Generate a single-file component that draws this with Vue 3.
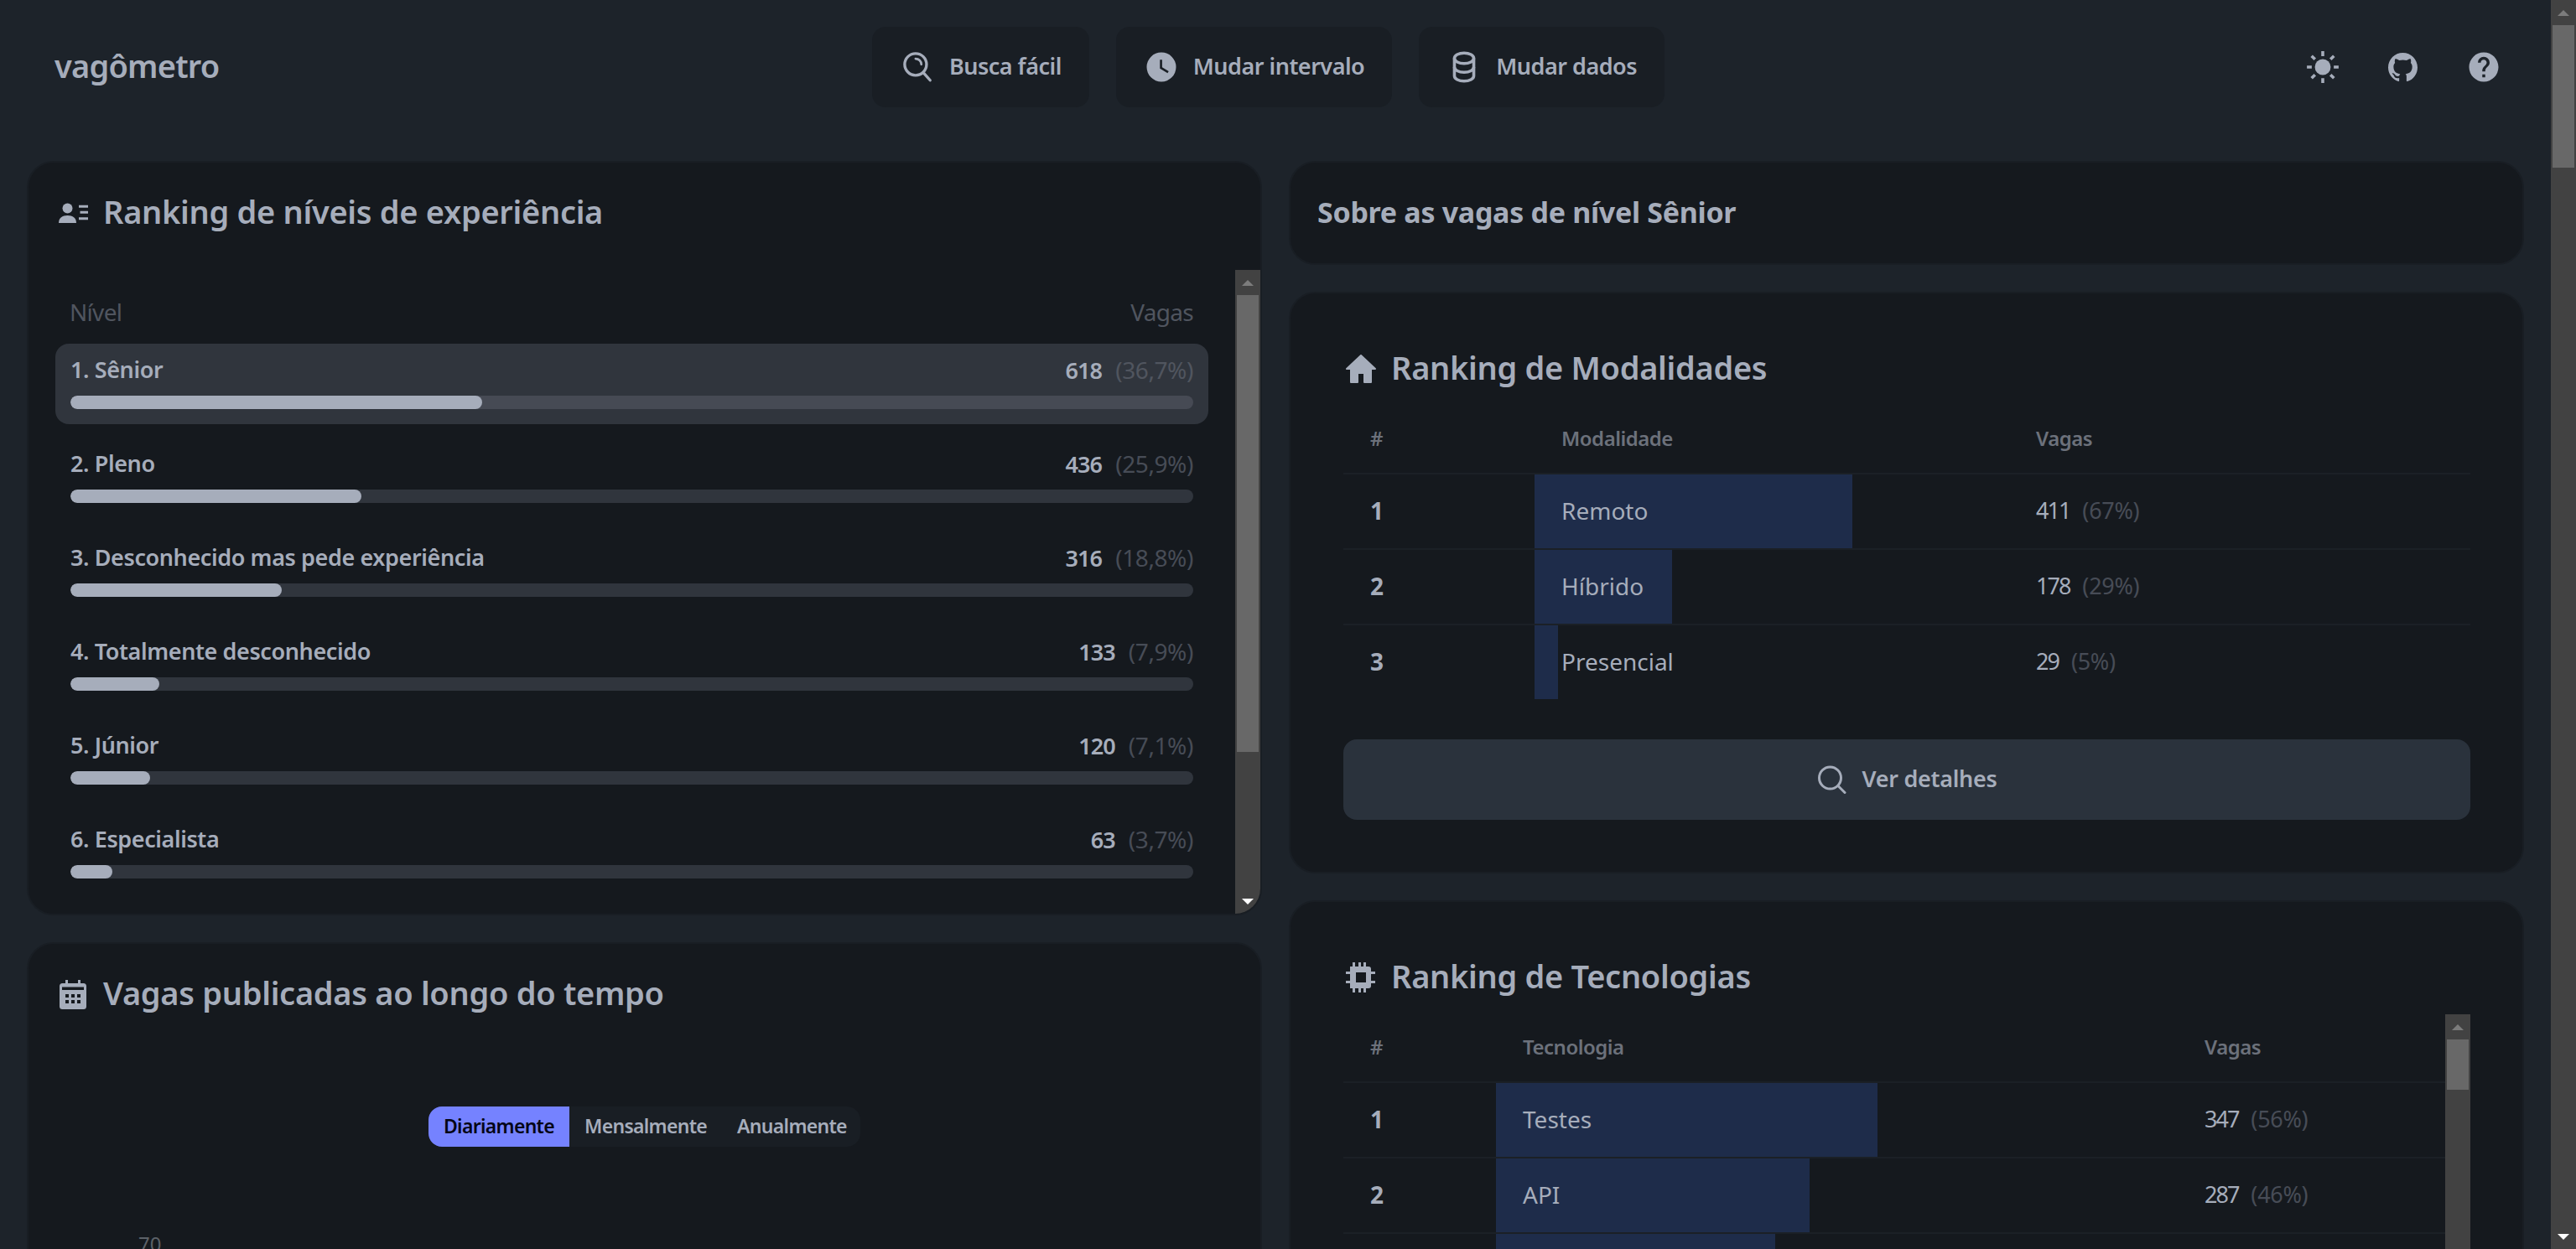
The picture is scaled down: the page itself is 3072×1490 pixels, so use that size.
<script setup>
const levels = [
  { name: '1. Sênior', count: 618, pct: 36.7, label: '36,7%', active: true },
  { name: '2. Pleno', count: 436, pct: 25.9, label: '25,9%' },
  { name: '3. Desconhecido mas pede experiência', count: 316, pct: 18.8, label: '18,8%' },
  { name: '4. Totalmente desconhecido', count: 133, pct: 7.9, label: '7,9%' },
  { name: '5. Júnior', count: 120, pct: 7.1, label: '7,1%' },
  { name: '6. Especialista', count: 63, pct: 3.7, label: '3,7%' },
]
const modes = [
  { rank: 1, name: 'Remoto', count: 411, pct: 67 },
  { rank: 2, name: 'Híbrido', count: 178, pct: 29 },
  { rank: 3, name: 'Presencial', count: 29, pct: 5 },
]
const techs = [
  { rank: 1, name: 'Testes', count: 347, pct: 56 },
  { rank: 2, name: 'API', count: 287, pct: 46 },
]
</script>

<template>
  <div class="app">
    <div class="main">
      <header class="header">
        <div class="logo">vagômetro</div>
        <nav class="nav">
          <button class="nav-btn">
            <svg class="ic" viewBox="0 0 40 40" fill="none" stroke="currentColor" stroke-width="3.2" stroke-linecap="round">
              <circle cx="18" cy="17" r="12.4" />
              <path d="M27 26.5l7.5 8.5" />
              <path d="M18 10.5a6.5 6.5 0 0 1 6.5 6.5" stroke-width="2.6" />
            </svg>
            <span>Busca fácil</span>
          </button>
          <button class="nav-btn">
            <svg class="ic" viewBox="0 0 24 24" fill="currentColor">
              <path d="M12,2A10,10 0 0,0 2,12A10,10 0 0,0 12,22A10,10 0 0,0 22,12A10,10 0 0,0 12,2M16.2,16.2L11,13V7H12.5V12.2L17,14.9L16.2,16.2Z" />
            </svg>
            <span>Mudar intervalo</span>
          </button>
          <button class="nav-btn">
            <svg class="ic" viewBox="0 0 40 40" fill="none" stroke="currentColor" stroke-width="3.4">
              <ellipse cx="20" cy="10" rx="11" ry="6" />
              <path d="M9 10v20c0 3.4 4.900 6 11 6s11-2.600 11-6V10" />
              <path d="M9 20c0 3.400 4.900 6 11 6s11-2.600 11-6" />
            </svg>
            <span>Mudar dados</span>
          </button>
        </nav>
        <div class="tools">
          <button class="tool">
            <svg class="ic" viewBox="0 0 40 40" fill="currentColor">
              <circle cx="20" cy="20" r="9" />
              <g stroke="currentColor" stroke-width="3.4">
                <path d="M20 2v5.5M20 32.5V38M2 20h5.5M32.5 20H38M7.3 7.3l3.9 3.9M28.8 28.8l3.9 3.9M7.3 32.7l3.9-3.9M28.8 11.2l3.9-3.9" />
              </g>
            </svg>
          </button>
          <button class="tool">
            <svg class="ic gh" viewBox="0 0 16 16" fill="currentColor">
              <path d="M8 0C3.58 0 0 3.58 0 8c0 3.54 2.29 6.53 5.47 7.59.4.07.55-.17.55-.38 0-.19-.01-.82-.01-1.49-2.01.37-2.53-.49-2.69-.94-.09-.23-.48-.94-.82-1.13-.28-.15-.68-.52-.01-.53.63-.01 1.08.58 1.23.82.72 1.21 1.87.87 2.33.66.07-.52.28-.87.51-1.07-1.78-.2-3.64-.89-3.64-3.95 0-.87.31-1.59.82-2.15-.08-.2-.36-1.02.08-2.12 0 0 .67-.21 2.2.82.64-.18 1.32-.27 2-.27.68 0 1.36.09 2 .27 1.53-1.04 2.2-.82 2.2-.82.44 1.1.16 1.92.08 2.12.51.56.82 1.27.82 2.15 0 3.07-1.87 3.75-3.65 3.95.29.25.54.73.54 1.48 0 1.07-.01 1.93-.01 2.2 0 .21.15.46.55.38A8.013 8.013 0 0016 8c0-4.42-3.58-8-8-8z" />
            </svg>
          </button>
          <button class="tool">
            <svg class="ic" viewBox="0 0 24 24" fill="currentColor">
              <path d="M15.07,11.25L14.17,12.17C13.45,12.89 13,13.5 13,15H11V14.5C11,13.39 11.45,12.39 12.17,11.67L13.41,10.41C13.78,10.05 14,9.55 14,9C14,7.89 13.1,7 12,7A2,2 0 0,0 10,9H8A4,4 0 0,1 12,5A4,4 0 0,1 16,9C16,9.88 15.64,10.67 15.07,11.25M13,19H11V17H13M12,2A10,10 0 0,0 2,12A10,10 0 0,0 12,22A10,10 0 0,0 22,12C22,6.47 17.5,2 12,2Z" />
            </svg>
          </button>
        </div>
      </header>

      <div class="columns">
        <div class="col">
          <section class="card card-levels">
            <h2 class="title">
              <span class="title-ic">
                <svg class="person" viewBox="0 0 35 24" fill="currentColor">
                  <circle cx="10.5" cy="6.5" r="6" />
                  <path d="M0 24c0-6 4.300-9 10.500-9s10.500 3 10.500 9z" />
                  <path d="M24 2.800h11v3H24zM25.500 9.800h9.500v3h-9.500zM24 17.300h11v3H24z" />
                </svg>
              </span>
              Ranking de níveis de experiência
            </h2>
            <div class="scroll-row">
              <div class="level-list">
                <div class="level-head">
                  <span>Nível</span>
                  <span>Vagas</span>
                </div>
                <div
                  v-for="l in levels"
                  :key="l.name"
                  class="level"
                  :class="{ 'level-active': l.active }"
                >
                  <div class="level-top">
                    <span>{{ l.name }}</span>
                    <span class="level-num">{{ l.count }}<em>({{ l.label }})</em></span>
                  </div>
                  <div class="track">
                    <div class="fill" :style="{ width: l.pct + '%' }"></div>
                  </div>
                </div>
              </div>
              <div class="sb">
                <div class="sb-btn"><i class="up"></i></div>
                <div class="sb-thumb sb-thumb-levels"></div>
                <div class="sb-btn sb-end"><i class="down"></i></div>
              </div>
            </div>
          </section>

          <section class="card card-chart">
            <h2 class="title">
              <span class="title-ic">
                <svg class="calendar" viewBox="0 0 32 35">
                  <path fill="currentColor" d="M7 0h3v4h12V0h3v4h3.500A3.500 3.500 0 0 1 32 7.500V31.500A3.500 3.500 0 0 1 28.500 35h-25A3.500 3.500 0 0 1 0 31.500V7.500A3.500 3.500 0 0 1 3.500 4H7z" />
                  <path fill="#15191e" d="M3 8.500h26v3.500H3zM7 17h4v4H7zM14 17h4v4h-4zM21 17h4v4h-4zM7 24h4v4H7zM14 24h4v4h-4zM21 24h4v4h-4z" />
                </svg>
              </span>
              Vagas publicadas ao longo do tempo
            </h2>
            <div class="segmented">
              <span class="seg seg-active">Diariamente</span>
              <span class="seg">Mensalmente</span>
              <span class="seg">Anualmente</span>
            </div>
            <div class="axis">70</div>
          </section>
        </div>

        <div class="col">
          <section class="card card-about">
            <h2 class="title title-about">Sobre as vagas de nível Sênior</h2>
          </section>

          <section class="card card-wide">
            <h2 class="title">
              <span class="title-ic">
                <svg class="home" viewBox="0 0 36 34" fill="currentColor" stroke="currentColor" stroke-width="2" stroke-linejoin="round">
                  <path d="M18 1L1 17h5v16h8V22h8v11h8V17h5z" />
                </svg>
              </span>
              Ranking de Modalidades
            </h2>
            <div class="table">
              <div class="thead row-mode">
                <span class="cell-rank">#</span>
                <span class="cell-name">Modalidade</span>
                <span class="cell-val">Vagas</span>
              </div>
              <div v-for="m in modes" :key="m.rank" class="trow row-mode">
                <span class="cell-rank rank">{{ m.rank }}</span>
                <span class="cell-name bar-cell">
                  <i class="bar" :style="{ width: m.pct + '%' }"></i>
                  <span class="bar-text">{{ m.name }}</span>
                </span>
                <span class="cell-val">{{ m.count }}<em>({{ m.pct }}%)</em></span>
              </div>
            </div>
            <button class="details">
              <svg class="search-lg" viewBox="0 0 36 34" fill="none" stroke="currentColor" stroke-width="3" stroke-linecap="round">
                <circle cx="15.500" cy="15" r="13" />
                <path d="M25 24.500l8 8" />
              </svg>
              <span>Ver detalhes</span>
            </button>
          </section>

          <section class="card card-tech">
            <h2 class="title">
              <span class="title-ic">
                <svg class="chip" viewBox="0 0 36 36" fill="currentColor">
                  <path fill-rule="evenodd" d="M8 0h3v5h4V0h3v5h3V0h3v5h3a3 3 0 0 1 3 3v3h5v3h-5v8h5v3h-5v3a3 3 0 0 1-3 3h-3v5h-3v-5h-3v5h-3v-5h-4v5H8v-5H5V25H0v-3h5v-8H0v-3h5V5h3zM12 12v12h12V12z" />
                </svg>
              </span>
              Ranking de Tecnologias
            </h2>
            <div class="scroll-row tech-row">
              <div class="table">
                <div class="thead row-tech">
                  <span class="cell-rank">#</span>
                  <span class="cell-name">Tecnologia</span>
                  <span class="cell-val">Vagas</span>
                </div>
                <div v-for="t in techs" :key="t.rank" class="trow row-tech">
                  <span class="cell-rank rank">{{ t.rank }}</span>
                  <span class="cell-name bar-cell">
                    <i class="bar" :style="{ width: t.pct + '%' }"></i>
                    <span class="bar-text">{{ t.name }}</span>
                  </span>
                  <span class="cell-val">{{ t.count }}<em>({{ t.pct }}%)</em></span>
                </div>
                <div class="trow row-tech">
                  <span class="cell-rank rank"></span>
                  <span class="cell-name bar-cell">
                    <i class="bar" :style="{ width: '41%' }"></i>
                  </span>
                  <span class="cell-val"></span>
                </div>
              </div>
              <div class="sb">
                <div class="sb-btn"><i class="up"></i></div>
                <div class="sb-thumb sb-thumb-tech"></div>
              </div>
            </div>
          </section>
        </div>
      </div>
    </div>

    <div class="sb sb-page">
      <div class="sb-btn"><i class="up"></i></div>
      <div class="sb-thumb sb-thumb-page"></div>
      <div class="sb-btn sb-end"><i class="down"></i></div>
    </div>
  </div>
</template>

<style>
html, body { margin: 0; background: #1d232a; }
</style>

<style scoped>
.app {
  display: flex;
  width: 3072px;
  height: 1490px;
  overflow: hidden;
  background: #1d232a;
  color: #a6adbb;
  font-family: "Noto Sans", "Liberation Sans", sans-serif;
}
.main { flex: 1; min-width: 0; padding: 0 32px; box-sizing: border-box; }

.header { height: 160px; display: flex; align-items: center; justify-content: space-between; }
.logo { width: 271px; box-sizing: border-box; padding: 0 0 4px 33px; font-size: 38px; font-weight: 600; letter-spacing: -0.8px; }
.nav { display: flex; gap: 32px; }
.nav-btn {
  height: 96px; display: flex; align-items: center; gap: 17px; padding: 0 33px;
  background: #191e24; border: 0; border-radius: 16px; color: inherit;
  font: 600 27px "Noto Sans", sans-serif; letter-spacing: -0.5px;
}
.nav-btn span, .details span { padding-bottom: 3px; }
.ic { width: 42px; height: 42px; flex: none; display: block; }
.tools { display: flex; }
.tool { width: 96px; height: 96px; display: flex; align-items: center; justify-content: center; background: none; border: 0; color: inherit; padding: 0; }
.gh { width: 35px; height: 35px; }

.columns { margin-top: 32px; display: grid; grid-template-columns: 1fr 1fr; gap: 32px; }
.col { display: flex; flex-direction: column; gap: 32px; min-width: 0; }
.card { background: #15191e; border: 2px solid #191e24; border-radius: 32px; box-sizing: border-box; overflow: hidden; }

.title { margin: 0; height: 56px; box-sizing: border-box; padding-bottom: 4px; display: flex; align-items: center; font-size: 38px; line-height: 52px; font-weight: 600; letter-spacing: -0.3px; }
.title-about { font-size: 34px; font-weight: 700; padding-bottom: 2px; }
.title-ic { width: 42px; margin: 4px 15px 0 0; display: flex; align-items: center; justify-content: center; flex: none; }
.person { width: 35px; height: 24px; }
.calendar { width: 32px; height: 35px; }
.home { width: 36px; height: 34px; }
.chip { width: 36px; height: 36px; }

.card-levels { height: 900px; display: flex; flex-direction: column; }
.card-levels .title { margin: 32px 32px 40px; flex: none; }
.scroll-row { display: flex; min-height: 0; flex: 1; }
.level-list { flex: 1; min-width: 0; padding: 0 32px; overflow: hidden; }
.level-head { height: 88px; box-sizing: border-box; padding: 30px 18px 0 17px; display: flex; justify-content: space-between; font-size: 28px; line-height: 40px; letter-spacing: -0.7px; color: #50555f; }
.level { height: 96px; box-sizing: border-box; padding: 11px 18px 0; border-radius: 16px; margin-bottom: 16px; }
.level-active { background: #30353d; }
.level-top { display: flex; justify-content: space-between; font-size: 27px; line-height: 40px; font-weight: 600; letter-spacing: -0.4px; height: 51px; }
.level-num { letter-spacing: -0.9px; }
.level-num em { font-style: normal; font-size: 28px; font-weight: 400; letter-spacing: -0.4px; color: #474c56; margin-left: 16px; }
.level-active .level-num em { color: #50555f; }
.track { height: 16px; border-radius: 8px; background: #30353d; overflow: hidden; }
.level-active .track { background: #464a54; }
.fill { height: 100%; border-radius: 8px; background: #a6adbb; }

.sb { width: 30px; flex: none; background: #424242; display: flex; flex-direction: column; }
.sb-btn { height: 30px; flex: none; display: flex; align-items: center; justify-content: center; }
.sb-end { margin-top: auto; }
.sb-thumb { margin: 0 2px; background: #686868; flex: none; }
.sb-thumb-levels { height: 545px; }
.sb-thumb-tech { height: 60px; }
.sb-thumb-page { height: 170px; }
.up { width: 0; height: 0; border-left: 7px solid transparent; border-right: 7px solid transparent; border-bottom: 7px solid #7c7c7c; }
.down { width: 0; height: 0; border-left: 7px solid transparent; border-right: 7px solid transparent; border-top: 7px solid #fff; }
.sb-page { height: 1490px; }

.card-chart { height: 600px; }
.card-chart .title { margin: 32px 32px 0; }
.segmented { margin: 106px auto 0; width: 515px; height: 48px; display: flex; background: #191e24; border-radius: 16px; overflow: hidden; font-size: 23px; font-weight: 600; letter-spacing: -0.7px; line-height: 46px; }
.seg { padding: 0 18px; white-space: nowrap; flex: none; }
.seg-active { background: #7582ff; color: #050617; width: 168px; box-sizing: border-box; text-align: center; padding: 0; }
.axis { margin: 108px 0 0 131px; font-size: 24px; line-height: 16px; color: #5c6168; }

.card-about { height: 124px; padding: 32px; }
.card-wide { height: 694px; padding: 62px 62px 0 63px; }
.card-tech { height: 600px; padding: 62px 62px 0 63px; }
.card-wide .title, .card-tech .title { margin-bottom: 16px; }
.table { flex: 1; min-width: 0; }
.thead { height: 82px; box-sizing: border-box; border-bottom: 2px solid #1b2026; align-items: center; font-size: 24px; font-weight: 600; color: #6c717b; letter-spacing: -0.5px; }
.thead > span { padding-bottom: 4px; }
.trow { height: 90px; box-sizing: border-box; border-bottom: 2px solid #1b2026; align-items: center; font-size: 28px; }
.trow:last-child { border-bottom: 0; height: 88px; }
.row-mode { display: grid; grid-template-columns: 228px 566px 1fr; }
.row-tech { display: grid; grid-template-columns: 182px 813px 1fr; }
.cell-rank { padding-left: 32px; }
.cell-name { padding-left: 32px; }
.cell-val { padding-left: 32px; }
.trow .cell-rank, .trow .cell-val, .bar-text { padding-bottom: 3px; }
.trow .cell-val { font-size: 27px; letter-spacing: -2px; }
.cell-val em { font-style: normal; color: #474c56; margin-left: 15px; letter-spacing: -0.3px; }
.rank { font-weight: 700; }
.bar-cell { position: relative; height: 100%; display: flex; align-items: center; box-sizing: border-box; }
.bar { position: absolute; left: 0; top: 0; bottom: 0; background: #1e2c4a; }
.bar-text { position: relative; }

.details {
  margin-top: 48px; width: 100%; height: 96px; display: flex; align-items: center; justify-content: center; gap: 18px;
  background: #2a323c; border: 0; border-radius: 16px; color: inherit;
  font: 600 27px "Noto Sans", sans-serif; letter-spacing: -0.3px;
}
.search-lg { width: 36px; height: 34px; }
.tech-row { height: 400px; }
</style>
